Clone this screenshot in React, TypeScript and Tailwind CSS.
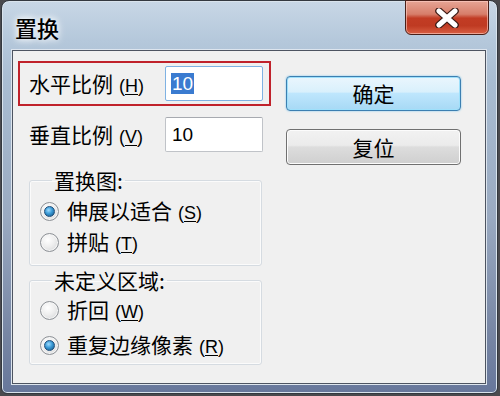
import React from "react";

const CJK = "font-['Noto_Sans_CJK_SC','Noto_Sans',sans-serif]";

function Mn({ k }: { k: string }) {
  return (
    <span className="ml-[6px] font-['Liberation_Sans',sans-serif] text-[18px]">
      (<span className="underline underline-offset-2">{k}</span>)
    </span>
  );
}

function Radio({ on }: { on: boolean }) {
  return (
    <div className="w-[19px] h-[19px] shrink-0 rounded-full border border-[#8d9196] bg-[radial-gradient(circle_at_40%_35%,#ffffff_0%,#eeeeee_45%,#cfd1d4_100%)] flex items-center justify-center shadow-[inset_0_0_0_1px_#f6f6f6]">
      {on && (
        <div className="w-[11px] h-[11px] rounded-full border border-[#1f4e7a] bg-[radial-gradient(circle_at_40%_35%,#9fdcff_0%,#3a9ad6_45%,#13507f_100%)]" />
      )}
    </div>
  );
}

function RadioRow({ on, text, k, className }: { on: boolean; text: string; k: string; className?: string }) {
  return (
    <div className={`flex items-center h-[30px] pl-[10px] ${className ?? ""}`}>
      <Radio on={on} />
      <span className={`ml-[8px] text-[21px] leading-none text-black ${CJK}`}>
        {text}
        <Mn k={k} />
      </span>
    </div>
  );
}

export default function App() {
  return (
    <div className="w-[500px] h-[396px] bg-[#4a4a4e] pl-[1px] pr-[2px] pb-[2px] overflow-hidden">
      <div className="w-[497px] h-[394px] rounded-t-[8px] rounded-b-[6px] border border-[#33383f] bg-[linear-gradient(to_bottom,#c8d7e6_0%,#b5c8db_10%,#a9bdd2_20%,#9aaac1_55%,#7786a4_85%,#67779b_100%)] shadow-[inset_0_0_0_1px_#d9e3ec] flex flex-col">
        {/* title bar */}
        <div className="h-[49px] flex items-start justify-between">
          <div
            className={`pl-[13px] pt-[13px] text-[22px] leading-[26px] font-medium text-black ${CJK} [text-shadow:0_0_6px_#ffffff,0_0_10px_#ffffff]`}
          >
            置换
          </div>
          <div className="mt-[-1px] mr-[8px] w-[84px] h-[35px] rounded-b-[6px] border border-[#4a2019] bg-[linear-gradient(to_bottom,#e6a595_0%,#d77e6a_40%,#c23c24_52%,#bf3a22_75%,#d95f43_100%)] shadow-[inset_0_0_0_1px_rgba(255,210,200,0.6)] flex items-center justify-center">
            <svg width="28" height="20" viewBox="0 0 28 20">
              <path d="M6 3 L22 17 M22 3 L6 17" stroke="#3a1a14" strokeWidth="7.5" strokeLinecap="round" />
              <path d="M6 3 L22 17 M22 3 L6 17" stroke="#ffffff" strokeWidth="5" strokeLinecap="round" />
            </svg>
          </div>
        </div>

        {/* client area */}
        <div className="ml-[10px] w-[474px] h-[334px] border border-[#4d5461] bg-[#f0f0f0] shadow-[0_0_0_1px_#dde5ee] flex">
          {/* left column */}
          <div className="ml-[5px] mt-[10px] w-[253px] flex flex-col">
            <div className="h-[45px] border-2 border-[#c0222b] flex items-center justify-between pl-[9px] pr-[6px]">
              <span className={`text-[21px] leading-none text-black ${CJK}`}>
                水平比例
                <Mn k="H" />
              </span>
              <div className="w-[98px] h-[35px] rounded-[2px] border border-[#7fb2e3] bg-white flex items-center pl-[5px]">
                <span className="bg-[#3a7bd0] text-white text-[19px] leading-[21px] font-['Liberation_Sans',sans-serif] px-[1px]">
                  10
                </span>
              </div>
            </div>
            <div className="mt-[11px] h-[35px] flex items-center justify-between pl-[11px] pr-[8px]">
              <span className={`text-[21px] leading-none text-black ${CJK}`}>
                垂直比例
                <Mn k="V" />
              </span>
              <div className="w-[98px] h-[35px] rounded-[2px] border border-[#c0c3c8] border-t-[#a7aab0] bg-white flex items-center pl-[6px]">
                <span className="text-black text-[19px] leading-[21px] font-['Liberation_Sans',sans-serif]">10</span>
              </div>
            </div>

            <fieldset className="mt-[15px] ml-[11px] w-[233px] h-[99px] border border-[#d5dbe1] rounded-[3px] shadow-[inset_0_0_0_1px_#fbfbfb] pb-[7px]">
              <legend className={`ml-[22px] px-[2px] text-[21px] leading-[26px] text-black ${CJK}`}>置换图:</legend>
              <RadioRow on text="伸展以适合" k="S" className="mt-[3px]" />
              <RadioRow on={false} text="拼贴" k="T" className="mt-[1px]" />
            </fieldset>

            <fieldset className="mt-[1px] ml-[11px] w-[233px] h-[98px] border border-[#d5dbe1] rounded-[3px] shadow-[inset_0_0_0_1px_#fbfbfb]">
              <legend className={`ml-[22px] px-[2px] text-[21px] leading-[26px] text-black ${CJK}`}>未定义区域:</legend>
              <RadioRow on={false} text="折回" k="W" className="mt-[2px]" />
              <RadioRow on text="重复边缘像素" k="R" className="mt-[5px]" />
            </fieldset>
          </div>

          {/* right column */}
          <div className="ml-[15px] mt-[25px] flex flex-col">
            <div className="w-[175px] h-[35px] rounded-[4px] border border-[#3c7fb1] bg-[linear-gradient(to_bottom,#eaf6fd_0%,#d9f0fc_45%,#bee6fd_50%,#a7d9f5_100%)] shadow-[inset_0_0_0_1px_#9ee0fb,0_0_2px_#6fc1ee] flex items-center justify-center">
              <span className={`text-[21px] leading-none text-black ${CJK}`}>确定</span>
            </div>
            <div className="mt-[18px] w-[175px] h-[36px] rounded-[4px] border border-[#707070] bg-[linear-gradient(to_bottom,#f2f2f2_0%,#ebebeb_45%,#dddddd_50%,#cfcfcf_100%)] shadow-[inset_0_0_0_1px_#fcfcfc] flex items-center justify-center">
              <span className={`text-[21px] leading-none text-black ${CJK}`}>复位</span>
            </div>
          </div>
        </div>
      </div>
    </div>
  );
}
